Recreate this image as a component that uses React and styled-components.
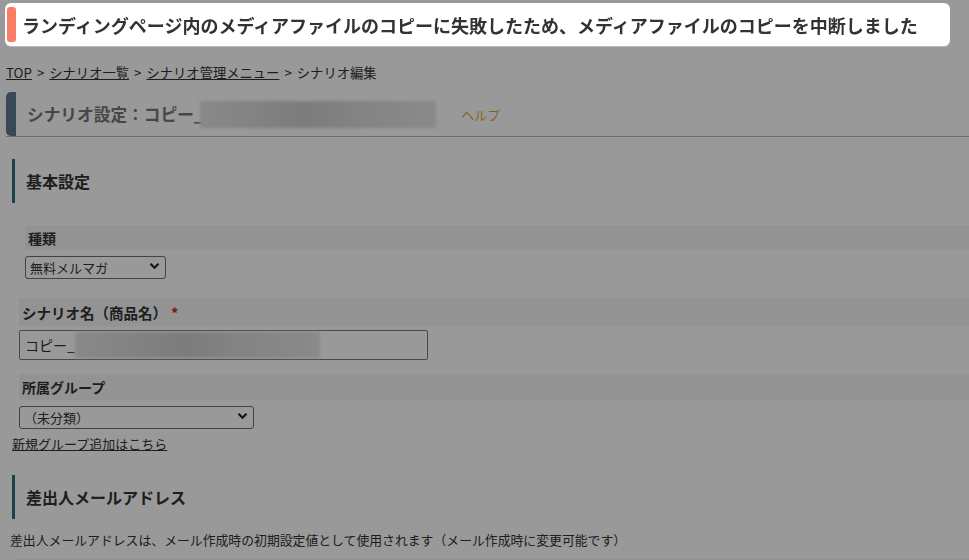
import React from "react";
import styled, { createGlobalStyle } from "styled-components";

const GlobalStyle = createGlobalStyle`
  html, body {
    margin: 0;
    padding: 0;
    background: #ffffff;
    font-family: "Noto Sans CJK JP", "Noto Sans", sans-serif;
    color: #333;
  }
`;

const Page = styled.div`
  padding-top: 63px;
  min-height: 560px;
  box-sizing: border-box;
  overflow: hidden;
`;

const Overlay = styled.div`
  position: fixed;
  inset: 0;
  background: rgba(0, 0, 0, 0.4);
  z-index: 10;
`;

const Toast = styled.div`
  position: fixed;
  top: 3px;
  left: 5px;
  width: 945px;
  height: 43px;
  box-sizing: border-box;
  background: #fff;
  border-radius: 6px;
  box-shadow: 0 1px 0 #bcbcbc;
  display: flex;
  align-items: center;
  padding: 0 0 0 2px;
  z-index: 20;
`;

const ToastMark = styled.span`
  width: 9px;
  height: 35px;
  border-radius: 3px;
  background: #fb7c66;
  flex: none;
`;

const ToastText = styled.span`
  margin-left: 6px;
  font-size: 18px;
  font-weight: 700;
  color: #333;
  white-space: nowrap;
`;

const Breadcrumb = styled.nav`
  padding-left: 6px;
  font-size: 13.3px;
  line-height: 20px;
  color: #333;
  white-space: nowrap;
`;

const Crumb = styled.a`
  color: #333;
  text-decoration: underline;
`;

const Sep = styled.span`
  margin: 0 5px;
`;

const TitleBar = styled.div`
  margin: 9px 0 0 6px;
  height: 44px;
  border-bottom: 1px solid #b8b8b8;
  display: flex;
  align-items: center;
`;

const TitleMark = styled.span`
  width: 10px;
  align-self: stretch;
  background: #62798f;
  border-radius: 5px 0 0 5px;
  flex: none;
`;

const TitleText = styled.h1`
  margin: 0 0 0 11px;
  font-size: 16.7px;
  font-weight: 700;
  color: #777;
  white-space: nowrap;
`;

const Redacted = styled.span`
  display: block;
  flex: none;
  width: ${(p) => p.$w}px;
  height: ${(p) => p.$h}px;
  margin-left: ${(p) => p.$ml || 0}px;
  background: linear-gradient(
    90deg,
    #e4e4e4 0%,
    #d9d9d9 25%,
    #cfcfcf 45%,
    #dadada 65%,
    #e6e6e6 100%
  );
  filter: blur(1.5px);
`;

const Help = styled.a`
  margin-left: 25px;
  font-size: 13px;
  color: #e0ac22;
  text-decoration: none;
`;

const SectionHeading = styled.h2`
  margin: ${(p) => p.$mt}px 0 0 12px;
  height: 44px;
  border-left: 3px solid #2d7181;
  padding-left: 11px;
  display: flex;
  align-items: center;
  font-size: 16px;
  font-weight: 700;
  color: #333;
`;

const LabelStrip = styled.div`
  margin: ${(p) => p.$mt}px 0 0 ${(p) => p.$ml}px;
  height: ${(p) => p.$h}px;
  background: #f6f6f6;
  display: flex;
  align-items: center;
  padding-left: 3px;
  font-size: ${(p) => p.$fs || 14}px;
  font-weight: 700;
  color: #333;
`;

const Required = styled.span`
  color: #d62a1e;
  margin-left: 4px;
`;

const SelectWrap = styled.div`
  position: relative;
  margin: 4px 0 0 ${(p) => p.$ml}px;
  width: ${(p) => p.$w}px;
  height: 23px;
`;

const Select = styled.select`
  appearance: none;
  width: 100%;
  height: 100%;
  box-sizing: border-box;
  border: 1px solid #6e6e6e;
  border-radius: 3px;
  background: #fff;
  padding: 0 20px 0 4px;
  font-family: inherit;
  font-size: 13px;
  color: #333;
`;

const Chevron = styled.svg`
  position: absolute;
  right: 6px;
  top: 8px;
  width: 11px;
  height: 8px;
  pointer-events: none;
`;

const InputBox = styled.div`
  margin: 4px 0 0 19px;
  width: 409px;
  height: 30px;
  box-sizing: border-box;
  border: 1px solid #7a7a7a;
  border-radius: 2px;
  background: #fff;
  display: flex;
  align-items: center;
  padding-left: 5px;
  font-size: 14px;
  color: #333;
`;

const TextLink = styled.a`
  display: block;
  margin: 8px 0 0 12px;
  font-size: 13px;
  line-height: 17px;
  color: #333;
  text-decoration: underline;
`;

const Note = styled.p`
  margin: 12px 0 0 10px;
  font-size: 12.85px;
  line-height: 18px;
  color: #333;
  white-space: nowrap;
`;

const Select2 = ({ value, w, ml }) => (
  <SelectWrap $w={w} $ml={ml}>
    <Select defaultValue={value}>
      <option>{value}</option>
    </Select>
    <Chevron viewBox="0 0 11 8">
      <path d="M1.5 1.8 L5.5 5.8 L9.5 1.8" fill="none" stroke="#222" strokeWidth="2.2" />
    </Chevron>
  </SelectWrap>
);

export default function App() {
  return (
    <>
      <GlobalStyle />
      <Page>
        <Breadcrumb>
          <Crumb>TOP</Crumb>
          <Sep>&gt;</Sep>
          <Crumb>シナリオ一覧</Crumb>
          <Sep>&gt;</Sep>
          <Crumb>シナリオ管理メニュー</Crumb>
          <Sep>&gt;</Sep>
          <span>シナリオ編集</span>
        </Breadcrumb>

        <TitleBar>
          <TitleMark />
          <TitleText>シナリオ設定：コピー_</TitleText>
          <Redacted $w={236} $h={27} $ml={-3} />
          <Help>ヘルプ</Help>
        </TitleBar>

        <SectionHeading $mt={22}>基本設定</SectionHeading>

        <LabelStrip $mt={22} $ml={25} $h={25}>種類</LabelStrip>
        <Select2 value="無料メルマガ" w={141} ml={25} />

        <LabelStrip $mt={21} $ml={19} $h={28} $fs={14.5}>
          シナリオ名（商品名）<Required>*</Required>
        </LabelStrip>
        <InputBox>
          コピー_
          <Redacted $w={245} $h={26} />
        </InputBox>

        <LabelStrip $mt={14} $ml={19} $h={26}>所属グループ</LabelStrip>
        <Select2 value="（未分類）" w={235} ml={19} />
        <TextLink>新規グループ追加はこちら</TextLink>

        <SectionHeading $mt={23}>差出人メールアドレス</SectionHeading>
        <Note>
          差出人メールアドレスは、メール作成時の初期設定値として使用されます（メール作成時に変更可能です）
        </Note>
        <LabelStrip $mt={10} $ml={14} $h={26} />
      </Page>
      <Overlay />
      <Toast>
        <ToastMark />
        <ToastText>
          ランディングページ内のメディアファイルのコピーに失敗したため、メディアファイルのコピーを中断しました
        </ToastText>
      </Toast>
    </>
  );
}
